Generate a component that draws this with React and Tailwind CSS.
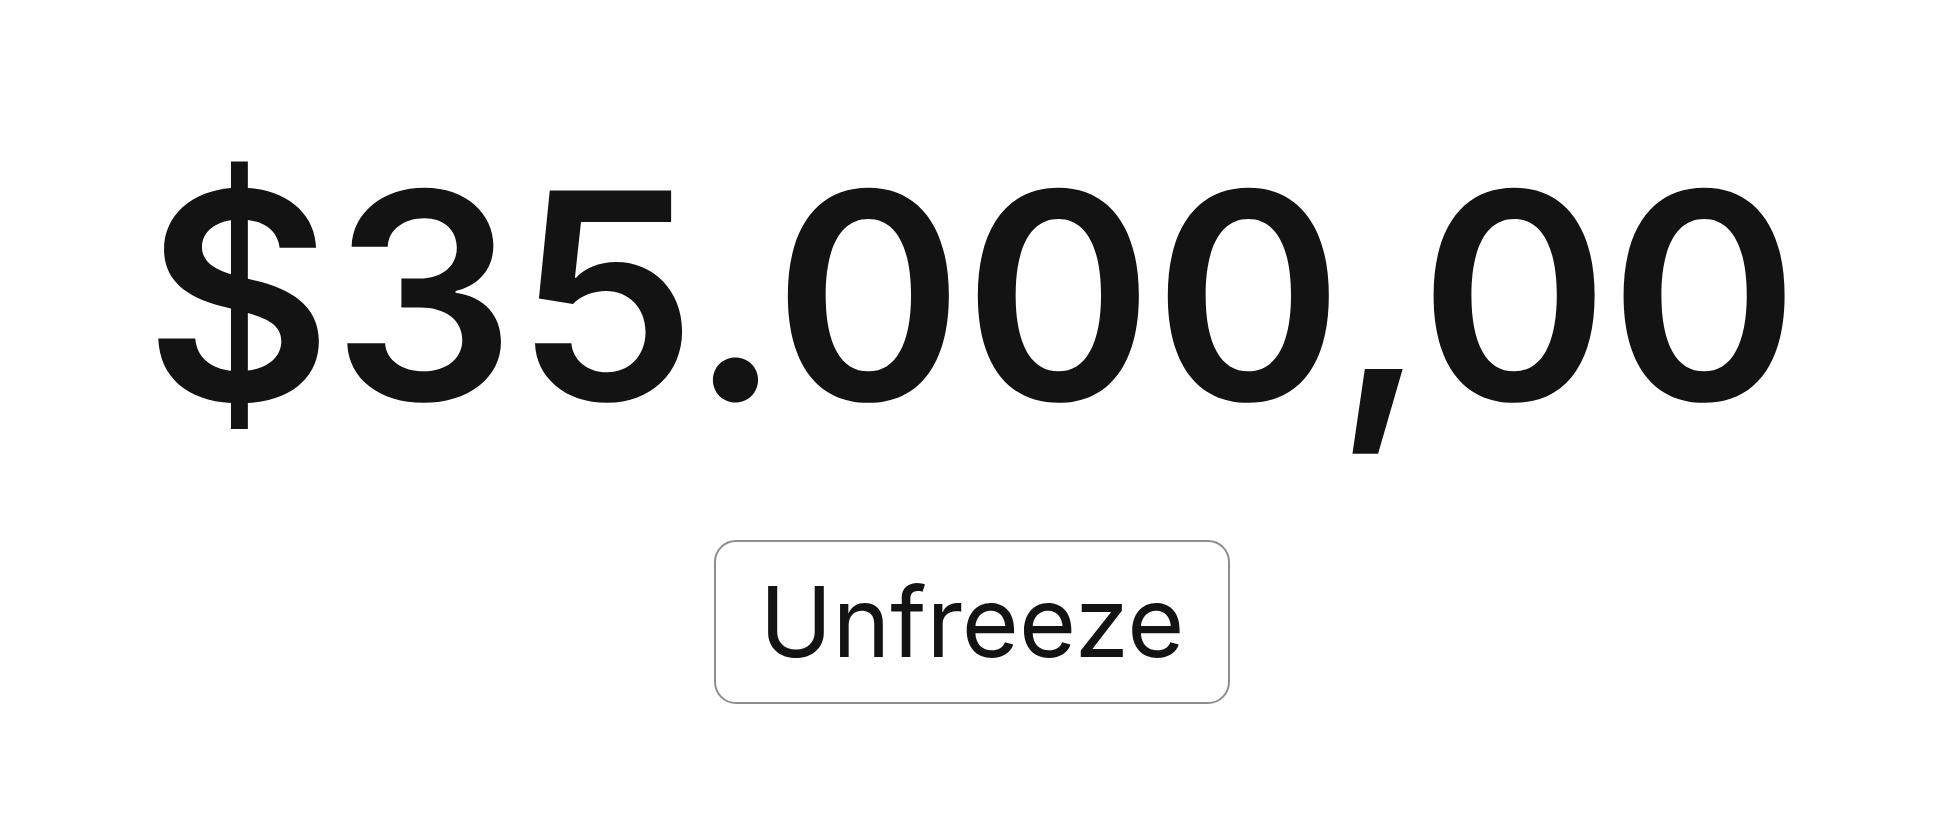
export default function App() {
  return (
    <div className="w-[1944px] h-[825px] bg-white flex flex-col items-center pt-[121px]" style={{ fontFamily: "Inter, 'Noto Sans', sans-serif" }}>
      <div className="text-[288px] font-semibold leading-[349px] text-[#131313] whitespace-nowrap">$35.000,00</div>
      <button className="mt-[70px] h-[164px] w-[516px] rounded-[22px] border-2 border-[#8d8d8d] bg-white flex items-center justify-center text-[98px] leading-[118px] font-normal text-[#131313]">
        Unfreeze
      </button>
    </div>
  );
}
